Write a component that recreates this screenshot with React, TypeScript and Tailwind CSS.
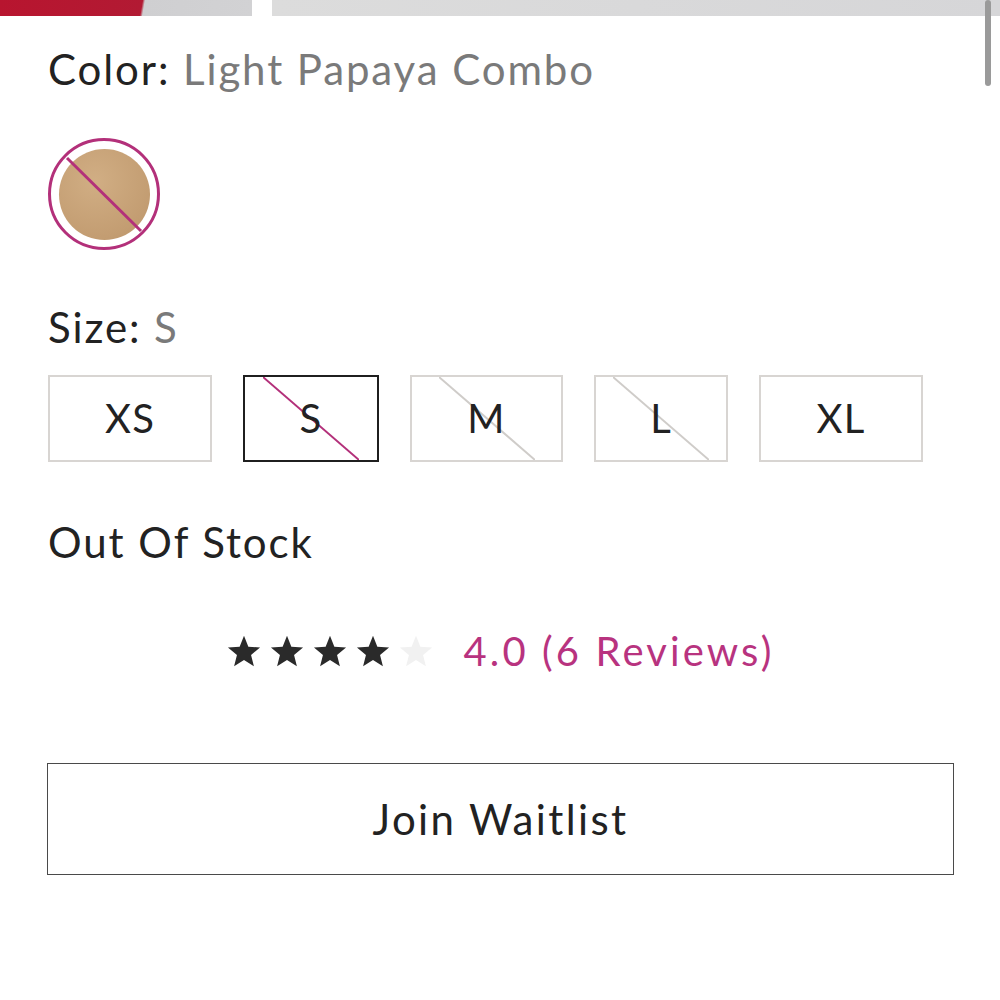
import React from "react";

type SizeOption = {
  label: string;
  width: number;
  state: "available" | "selected-out" | "out";
};

const sizes: SizeOption[] = [
  { label: "XS", width: 164, state: "available" },
  { label: "S", width: 136, state: "selected-out" },
  { label: "M", width: 153, state: "out" },
  { label: "L", width: 134, state: "out" },
  { label: "XL", width: 164, state: "available" },
];

const Strike: React.FC<{ color: string }> = ({ color }) => (
  <svg
    className="absolute top-0 left-1/2 -translate-x-1/2 h-full w-[96px] pointer-events-none"
    viewBox="0 0 96 86"
    preserveAspectRatio="none"
  >
    <line x1="0" y1="0" x2="96" y2="86" stroke={color} strokeWidth="2" />
  </svg>
);

const SizeButton: React.FC<{ size: SizeOption }> = ({ size }) => {
  const selected = size.state === "selected-out";
  return (
    <button
      style={{ width: size.width }}
      className={`relative h-[87px] flex items-center justify-center text-[40px] tracking-[0.03em] text-[#222] bg-white ${
        selected ? "border-2 border-[#1f1f1f]" : "border-[2.5px] border-[#d8d5d2]"
      }`}
    >
      {size.state === "out" && <Strike color="#cfccc9" />}
      {selected && <Strike color="#b3307a" />}
      <span className="relative">{size.label}</span>
    </button>
  );
};

const Star: React.FC<{ filled: boolean }> = ({ filled }) => (
  <svg viewBox="0 0 24 24" className="w-[36px] h-[36px]">
    <path
      d="M12 1.8l2.9 7.3 7.8.5-6 5 1.9 7.6L12 18l-6.6 4.2 1.9-7.6-6-5 7.8-.5z"
      fill={filled ? "#2a2a2a" : "#f1f1f1"}
    />
  </svg>
);

const App: React.FC = () => {
  return (
    <div
      className="relative w-[1000px] h-[1000px] bg-white overflow-hidden text-[#222]"
      style={{ fontFamily: "Lato, 'Open Sans', sans-serif" }}
    >
      {/* product image strip, cut off at the top */}
      <div className="flex h-[16px] gap-[20px]">
        <div className="w-[252px] h-full bg-[linear-gradient(100deg,#b8152f_0%,#b21a33_56%,#cfcfd1_57%,#d2d2d4_100%)]" />
        <div className="flex-1 h-full bg-[linear-gradient(90deg,#dcdcdc,#d6d6d8)]" />
      </div>
      <div className="absolute right-[9px] top-0 w-[6px] h-[86px] rounded-full bg-[#9a9a9a]" />

      <div className="px-[48px]">
        <p className="mt-[28px] text-[42px] leading-[1.2] tracking-[0.045em]">
          Color: <span className="text-[#7a7a7a]">Light Papaya Combo</span>
        </p>

        <div className="mt-[44px] w-[112px] h-[112px] rounded-full border-[3px] border-[#b3307a] flex items-center justify-center relative">
          <div className="w-[91px] h-[91px] rounded-full bg-[radial-gradient(circle_at_40%_35%,#d1ae84,#c39d72_70%,#b99369)]" />
          <svg viewBox="0 0 112 112" className="absolute inset-[-3px] w-[112px] h-[112px]">
            <line x1="19" y1="20" x2="93" y2="93" stroke="#b3307a" strokeWidth="3" />
          </svg>
        </div>

        <p className="mt-[52px] text-[42px] leading-[1.2] tracking-[0.045em]">
          Size: <span className="text-[#7a7a7a]">S</span>
        </p>

        <div className="mt-[22px] flex gap-[31px]">
          {sizes.map((s) => (
            <SizeButton key={s.label} size={s} />
          ))}
        </div>

        <p className="mt-[55px] text-[42px] leading-[1.2] tracking-[0.046em]">Out Of Stock</p>

        <div className="mt-[60px] flex items-center justify-center gap-[30px]">
          <div className="flex items-center gap-[7px]">
            {[true, true, true, true, false].map((f, i) => (
              <Star key={i} filled={f} />
            ))}
          </div>
          <span className="text-[40px] leading-[1.2] text-[#b8337f] tracking-[0.078em]">
            4.0 (6 Reviews)
          </span>
        </div>

        <button className="mt-[88px] w-[907px] -ml-[1px] h-[112px] border border-[#4a4a4a] flex items-center justify-center text-[42px] tracking-[0.057em] text-[#222]">
          Join Waitlist
        </button>
      </div>
    </div>
  );
};

export default App;
